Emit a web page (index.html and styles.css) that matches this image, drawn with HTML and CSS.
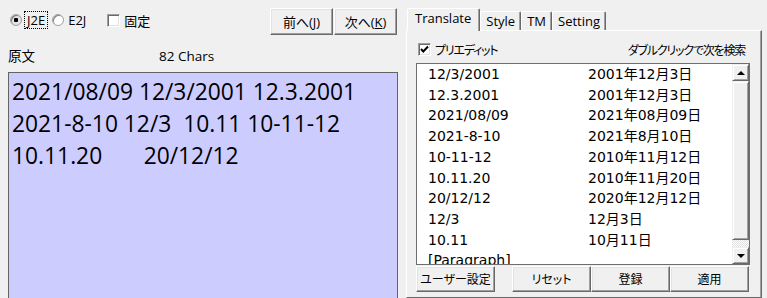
FILE: index.html
```html
<!DOCTYPE html>
<html lang="ja">
<head>
    <meta charset="UTF-8">
    <title>日付変換</title>
    <link rel="stylesheet" href="styles.css">
</head>
<body>
<div class="window">
    <div class="source-pane">
        <div class="toolbar">
            <div class="modes">
                <label class="radio-item"><span class="radio checked"></span><span class="focus">J2E</span></label>
                <label class="radio-item"><span class="radio"></span><span class="caption">E2J</span></label>
                <label class="check-item fixed"><span class="checkbox"></span><span class="caption">固定</span></label>
            </div>
            <div class="nav-buttons">
                <button class="btn">前へ(<u>J</u>)</button>
                <button class="btn">次へ(<u>K</u>)</button>
            </div>
        </div>
        <div class="source-head">
            <span class="source-label">原文</span>
            <span class="count">82 Chars</span>
        </div>
        <div class="source-text">2021/08/09 12/3/2001 12.3.2001
2021-8-10 12/3  10.11 10-11-12
10.11.20       20/12/12</div>
    </div>

    <div class="tabs">
        <div class="tab-strip">
            <div class="tab active">Translate</div>
            <div class="tab">Style</div>
            <div class="tab">TM</div>
            <div class="tab">Setting</div>
        </div>
        <div class="tab-panel">
            <div class="panel-head">
                <label class="check-item">
                    <span class="checkbox">
                        <svg viewBox="0 0 11 11" width="11" height="11"><path d="M2 5 L4.3 7.5 L9 2.5" fill="none" stroke="#000" stroke-width="2"/></svg>
                    </span>
                    <span class="caption">プリエディット</span>
                </label>
                <span class="hint">ダブルクリックで次を検索</span>
            </div>
            <div class="list">
                <div class="rows" id="rows"></div>
                <div class="scrollbar">
                    <div class="sb-btn"><span class="arrow up"></span></div>
                    <div class="sb-thumb"></div>
                    <div class="sb-track"></div>
                    <div class="sb-btn"><span class="arrow down"></span></div>
                </div>
            </div>
            <div class="actions">
                <button class="btn wide first">ユーザー設定</button>
                <button class="btn wide">リセット</button>
                <button class="btn wide">登録</button>
                <button class="btn wide">適用</button>
            </div>
        </div>
    </div>
</div>

<script>
    const pairs = [
        ['12/3/2001', '2001年12月3日'],
        ['12.3.2001', '2001年12月3日'],
        ['2021/08/09', '2021年08月09日'],
        ['2021-8-10', '2021年8月10日'],
        ['10-11-12', '2010年11月12日'],
        ['10.11.20', '2010年11月20日'],
        ['20/12/12', '2020年12月12日'],
        ['12/3', '12月3日'],
        ['10.11', '10月11日'],
        ['[Paragraph]', '']
    ];

    const rows = document.getElementById('rows');
    pairs.forEach(pair => {
        const row = document.createElement('div');
        row.className = 'row';
        row.innerHTML = `<span class="src">${pair[0]}</span><span class="dst">${pair[1]}</span>`;
        rows.appendChild(row);
    });
</script>
</body>
</html>
```

FILE: styles.css
```css
* {
    box-sizing: border-box;
}

body {
    margin: 0;
    background: #f0f0f0;
    font-family: 'Open Sans', 'Noto Sans CJK JP', sans-serif;
    font-size: 13px;
    color: #000;
    overflow: hidden;
}

.window {
    display: flex;
    width: 767px;
    height: 298px;
    overflow: hidden;
}

/* left side: source text */

.source-pane {
    width: 406px;
    padding: 0 8px;
    display: flex;
    flex-direction: column;
}

.toolbar {
    display: flex;
    justify-content: space-between;
    height: 44px;
    flex-shrink: 0;
}

.modes {
    display: flex;
    align-items: center;
    height: 18px;
    margin-top: 11px;
}

.radio-item,
.check-item {
    display: flex;
    align-items: center;
}

.radio {
    width: 12px;
    height: 12px;
    border-radius: 50%;
    border: 1px solid #a0a0a0;
    box-shadow: inset 1px 1px #808080;
    background: #fff;
    margin-left: 2px;
}

.radio.checked {
    background: radial-gradient(circle, #000 0 2px, #e3e3e3 2.5px);
}

.focus {
    outline: 1px dotted #000;
    outline-offset: -1px;
    height: 18px;
    line-height: 18px;
    padding: 0 3px;
    margin-left: 2px;
    margin-right: 2px;
}

.radio-item .caption {
    margin-left: 4px;
}

.fixed {
    margin-left: 21px;
}

.checkbox {
    width: 13px;
    height: 13px;
    display: flex;
    align-items: center;
    justify-content: center;
    background: #fff;
    border: 1px solid;
    border-color: #a0a0a0 #fff #fff #a0a0a0;
    box-shadow: inset 1px 1px #696969, inset -1px -1px #e3e3e3;
}

.check-item .caption {
    margin-left: 4px;
}

.nav-buttons {
    display: flex;
    gap: 1px;
    margin-top: 8px;
    margin-right: 1px;
}

.btn {
    height: 27px;
    width: 63px;
    padding: 0;
    font-family: 'Open Sans', 'Noto Sans CJK JP', sans-serif;
    font-size: 13px;
    color: #000;
    background: #f0f0f0;
    border: 1px solid;
    border-color: #fff #696969 #696969 #fff;
    box-shadow: inset -1px -1px #a0a0a0, inset 1px 1px #e3e3e3;
}

.source-head {
    display: flex;
    height: 28px;
    flex-shrink: 0;
    padding-top: 2px;
    line-height: 20px;
    font-size: 13.5px;
}

.source-label {
    width: 151px;
}

.source-text {
    height: 240px;
    flex-shrink: 0;
    background: #ccccff;
    border: 1px solid #646464;
    padding: 3px 3px;
    font-size: 22.8px;
    line-height: 31.8px;
    white-space: pre;
}

/* right side: tab control */

.tabs {
    width: 356px;
    display: flex;
    flex-direction: column;
    padding-top: 8px;
}

.tab-strip {
    display: flex;
    height: 22px;
    flex-shrink: 0;
    padding-left: 1px;
    position: relative;
    z-index: 1;
}

.tab {
    height: 19px;
    margin-top: 3px;
    padding: 0 5px;
    border: 1px solid;
    border-bottom: none;
    border-color: #fff #696969 transparent #fff;
    border-radius: 2px 2px 0 0;
    box-shadow: inset -1px 0 #a0a0a0;
    font-size: 13px;
    line-height: 18px;
}

.tab.active {
    height: 23px;
    margin-top: 0;
    padding: 0 8px 0 7px;
    background: #f0f0f0;
    line-height: 19px;
}

.tab-panel {
    flex: 1;
    border: 1px solid;
    border-color: #fff #696969 #696969 #fff;
    box-shadow: inset -1px 0 #a0a0a0;
    padding: 11px 11px 0 9px;
}

.panel-head {
    display: flex;
    justify-content: space-between;
    align-items: center;
    height: 15px;
    margin-bottom: 6px;
    padding-left: 2px;
    padding-right: 5px;
    font-size: 12px;
    font-feature-settings: "palt";
}

.panel-head .caption,
.hint {
    letter-spacing: -1.2px;
}

.list {
    display: flex;
    height: 202px;
    background: #fff;
    border: 1px solid #6e6e6e;
}

.rows {
    flex: 1;
    overflow: hidden;
    padding-left: 11px;
    font-family: 'DejaVu Sans', 'Noto Sans CJK JP', sans-serif;
    font-size: 14px;
    line-height: 20.7px;
}

.row {
    display: flex;
    white-space: nowrap;
}

.src {
    width: 160px;
}

.scrollbar {
    width: 17px;
    display: flex;
    flex-direction: column;
}

.sb-btn,
.sb-thumb {
    background: #f0f0f0;
    border: 1px solid;
    border-color: #f0f0f0 #696969 #696969 #f0f0f0;
    box-shadow: inset 1px 1px #fff, inset -1px -1px #a0a0a0;
}

.sb-btn {
    height: 17px;
    flex-shrink: 0;
    display: flex;
    align-items: center;
    justify-content: center;
}

.sb-thumb {
    height: 159px;
    flex-shrink: 0;
}

.sb-track {
    flex: 1;
    background: repeating-conic-gradient(#fff 0 25%, #e0e0e0 0 50%) 0 0 / 2px 2px;
}

.arrow {
    width: 0;
    height: 0;
    border-left: 4px solid transparent;
    border-right: 4px solid transparent;
}

.arrow.up {
    border-bottom: 4px solid #000;
}

.arrow.down {
    border-top: 4px solid #000;
}

.actions {
    display: flex;
    margin-top: 1px;
}

.btn.wide {
    width: 79px;
    height: 26px;
    font-size: 12px;
    font-feature-settings: "palt";
}

.btn.first {
    margin-right: 17px;
}
```
